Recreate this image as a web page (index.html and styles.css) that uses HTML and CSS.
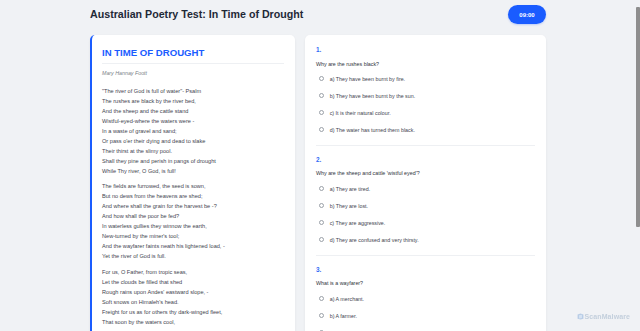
FILE: index.html
```html
<!DOCTYPE html>
<html lang="en">
<head>
<meta charset="utf-8">
<title>Australian Poetry Test: In Time of Drought</title>
<link rel="stylesheet" href="styles.css">
</head>
<body>
<div class="page">
  <header class="top">
    <h1 class="title">Australian Poetry Test: In Time of Drought</h1>
    <div class="timer">09:00</div>
  </header>
  <main class="grid">
    <section class="card poem-card">
      <h2 class="poem-title">IN TIME OF DROUGHT</h2>
      <p class="author">Mary Hannay Foott</p>
      <div class="stanza">
        <p>"The river of God is full of water"- Psalm</p>
        <p>The rushes are black by the river bed,</p>
        <p>And the sheep and the cattle stand</p>
        <p>Wistful-eyed-where the waters were -</p>
        <p>In a waste of gravel and sand;</p>
        <p>Or pass o'er their dying and dead to slake</p>
        <p>Their thirst at the slimy pool.</p>
        <p>Shall they pine and perish in pangs of drought</p>
        <p>While Thy river, O God, is full!</p>
      </div>
      <div class="stanza">
        <p>The fields are furrowed, the seed is sown,</p>
        <p>But no dews from the heavens are shed;</p>
        <p>And where shall the grain for the harvest be -?</p>
        <p>And how shall the poor be fed?</p>
        <p>In waterless gullies they winnow the earth,</p>
        <p>New-turned by the miner's tool;</p>
        <p>And the wayfarer faints neath his lightened load, -</p>
        <p>Yet the river of God is full.</p>
      </div>
      <div class="stanza">
        <p>For us, O Father, from tropic seas,</p>
        <p>Let the clouds be filled that shed</p>
        <p>Rough rains upon Andes' eastward slope, -</p>
        <p>Soft snows on Himaleh's head.</p>
        <p>Freight for us as for others thy dark-winged fleet,</p>
        <p>That soon by the waters cool,</p>
      </div>
    </section>
    <section class="card quiz-card">
      <div class="question">
        <div class="q-num">1.</div>
        <div class="q-text">Why are the rushes black?</div>
        <label class="option"><span class="radio"></span>a) They have been burnt by fire.</label>
        <label class="option"><span class="radio"></span>b) They have been burnt by the sun.</label>
        <label class="option"><span class="radio"></span>c) It is their natural colour.</label>
        <label class="option"><span class="radio"></span>d) The water has turned them black.</label>
      </div>
      <div class="question">
        <div class="q-num">2.</div>
        <div class="q-text">Why are the sheep and cattle 'wistful eyed'?</div>
        <label class="option"><span class="radio"></span>a) They are tired.</label>
        <label class="option"><span class="radio"></span>b) They are lost.</label>
        <label class="option"><span class="radio"></span>c) They are aggressive.</label>
        <label class="option"><span class="radio"></span>d) They are confused and very thirsty.</label>
      </div>
      <div class="question">
        <div class="q-num">3.</div>
        <div class="q-text">What is a wayfarer?</div>
        <label class="option"><span class="radio"></span>a) A merchant.</label>
        <label class="option"><span class="radio"></span>b) A farmer.</label>
        <label class="option"><span class="radio"></span>c) A traveller.</label>
        <label class="option"><span class="radio"></span>d) A miner.</label>
      </div>
    </section>
  </main>
</div>
<div class="scrollbar"><div class="scroll-thumb"></div></div>
<div class="watermark">
  <svg class="wm-icon" viewBox="0 0 12 12" width="7" height="7" aria-hidden="true">
    <path d="M1 2.5 L6 1 L11 2.5 L11 10 L6 11 L1 10 Z" fill="#b9cde6"/>
    <path d="M3.5 4 L8.5 3 L8.5 8.5 L3.5 9.5 Z" fill="#d6e3f3"/>
  </svg>
  <span>ScanMalware</span>
</div>
</body>
</html>
```
FILE: styles.css
```css
html, body {
  margin: 0;
  padding: 0;
  background: #f0f2f5;
  font-family: "Liberation Sans", Arial, sans-serif;
}

.page {
  width: 456px;
  margin: 0 auto;
  padding: 5px 4px 12px 0;
}

.top {
  display: flex;
  justify-content: space-between;
  align-items: center;
  height: 19px;
  margin-bottom: 11px;
}

.title {
  margin: 0;
  font-size: 10.67px;
  line-height: 19px;
  font-weight: 700;
  color: #1f2937;
}

.timer {
  width: 38px;
  height: 19px;
  border-radius: 10px;
  background: #1a5cff;
  color: #fff;
  font-weight: 700;
  font-size: 6px;
  display: flex;
  align-items: center;
  justify-content: center;
  box-shadow: 0 1px 2px rgba(26, 92, 255, 0.25);
}

.grid {
  display: grid;
  grid-template-columns: 205px 241px;
  gap: 10px;
  align-items: start;
}

.card {
  background: #fff;
  border-radius: 5px;
  box-shadow: 0 1px 3px rgba(0, 0, 0, 0.06);
}

.poem-card {
  border-left: 2px solid #1a5cff;
  padding: 12px 11px 12px 10px;
}

.poem-title {
  margin: 0;
  padding-bottom: 4px;
  border-bottom: 1px solid #eef0f3;
  font-size: 9.6px;
  line-height: 12px;
  font-weight: 700;
  color: #1a5cff;
}

.author {
  margin: 5px 0 0;
  font-size: 5.3px;
  line-height: 8px;
  font-style: italic;
  color: #7a7f87;
}

.stanza {
  margin-top: 5.5px;
}
.stanza:first-of-type {
  margin-top: 8.8px;
}

.stanza p {
  margin: 0;
  font-size: 5.6px;
  line-height: 10px;
  color: #3f4550;
}

.quiz-card {
  padding: 11px 11px 8px;
}

.question {
  padding: 9.7px 0 7px;
  border-bottom: 1px solid #eef0f3;
}
.question:first-child {
  padding-top: 0;
}
.question:last-child {
  border-bottom: none;
}

.q-num {
  font-size: 6.4px;
  line-height: 8px;
  font-weight: 700;
  color: #2f6bf5;
}

.q-text {
  margin-top: 5.5px;
  font-size: 5.33px;
  line-height: 8px;
  color: #2f343c;
}

.option {
  display: flex;
  align-items: center;
  height: 17px;
  font-size: 5.33px;
  line-height: 8px;
  color: #3f4550;
}
.q-text + .option {
  margin-top: 2.8px;
}

.radio {
  width: 3.4px;
  height: 3.4px;
  border: 0.5px solid #9aa0a8;
  border-radius: 50%;
  margin: 0 5.6px 0 2.7px;
  flex: none;
}

.scrollbar {
  position: fixed;
  top: 0;
  right: 0;
  bottom: 0;
  width: 5px;
  padding: 7px 0;
  box-sizing: border-box;
}

.scroll-thumb {
  width: 3.5px;
  margin-left: 1px;
  height: 220px;
  background: #8e8e8e;
  border-radius: 1px;
}

.watermark {
  position: fixed;
  right: 10px;
  bottom: 11px;
  display: flex;
  align-items: center;
  gap: 1px;
  font-size: 7px;
  font-weight: 700;
  color: #c3cfdc;
  letter-spacing: 0.1px;
}

.wm-icon {
  display: block;
}
```
